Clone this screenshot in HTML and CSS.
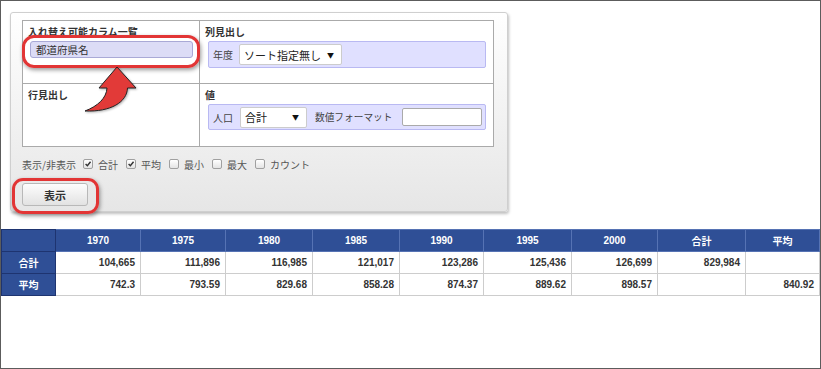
FILE: index.html
```html
<!DOCTYPE html>
<html lang="ja">
<head>
    <meta charset="UTF-8">
    <meta name="viewport" content="width=device-width, initial-scale=1.0">
    <title>ピボット集計</title>
    <link rel="stylesheet" href="styles.css">
</head>
<body>
    <div class="frame">
        <div class="panel">
            <table class="setup">
                <tr>
                    <td class="cell">
                        <div class="cell-title">入れ替え可能カラム一覧</div>
                        <div class="ring-wrap chip-ring">
                            <div class="chip">都道府県名</div>
                        </div>
                    </td>
                    <td class="cell">
                        <div class="cell-title">列見出し</div>
                        <div class="zone">
                            <span class="zone-label">年度</span>
                            <span class="select select-sort">ソート指定無し<span class="caret">▼</span></span>
                        </div>
                    </td>
                </tr>
                <tr>
                    <td class="cell">
                        <div class="cell-title">行見出し</div>
                    </td>
                    <td class="cell">
                        <div class="cell-title">値</div>
                        <div class="zone zone-values">
                            <span class="zone-label">人口</span>
                            <span class="select select-agg">合計<span class="caret">▼</span></span>
                            <span class="zone-label format-label">数値フォーマット</span>
                            <span class="text-input"></span>
                        </div>
                    </td>
                </tr>
            </table>

            <div class="toggles">
                <span class="toggles-label">表示/非表示</span>
                <label class="toggle"><span class="check checked"><svg viewBox="0 0 10 10"><path d="M2 5 L4.2 7.2 L8.2 2.2"/></svg></span>合計</label>
                <label class="toggle"><span class="check checked"><svg viewBox="0 0 10 10"><path d="M2 5 L4.2 7.2 L8.2 2.2"/></svg></span>平均</label>
                <label class="toggle"><span class="check"></span>最小</label>
                <label class="toggle"><span class="check"></span>最大</label>
                <label class="toggle"><span class="check"></span>カウント</label>
            </div>

            <div class="ring-wrap btn-ring">
                <button class="show-btn" type="button">表示</button>
            </div>

            <!-- annotation arrow -->
            <svg class="arrow" width="62" height="56" viewBox="0 0 62 56">
                <path d="M37 5 L56 26 L47.5 26 C47 40 31 50 5 49 C18 44 26.5 36 27 26 L19 26 Z"/>
            </svg>
        </div>

        <table class="result">
            <colgroup>
                <col style="width:54px">
                <col style="width:85px">
                <col style="width:85px">
                <col style="width:87px">
                <col style="width:87px">
                <col style="width:84px">
                <col style="width:88px">
                <col style="width:86px">
                <col style="width:88px">
                <col>
            </colgroup>
            <tr>
                <th class="corner"></th>
                <th>1970</th>
                <th>1975</th>
                <th>1980</th>
                <th>1985</th>
                <th>1990</th>
                <th>1995</th>
                <th>2000</th>
                <th>合計</th>
                <th>平均</th>
            </tr>
            <tr>
                <th class="row-head">合計</th>
                <td>104,665</td>
                <td>111,896</td>
                <td>116,985</td>
                <td>121,017</td>
                <td>123,286</td>
                <td>125,436</td>
                <td>126,699</td>
                <td>829,984</td>
                <td></td>
            </tr>
            <tr>
                <th class="row-head">平均</th>
                <td>742.3</td>
                <td>793.59</td>
                <td>829.68</td>
                <td>858.28</td>
                <td>874.37</td>
                <td>889.62</td>
                <td>898.57</td>
                <td></td>
                <td>840.92</td>
            </tr>
        </table>
    </div>
</body>
</html>
```
FILE: styles.css
```css
* {
    box-sizing: border-box;
}

body {
    margin: 0;
    font-family: "Liberation Sans", "Noto Sans CJK JP", sans-serif;
    color: #333;
    background-color: #fff;
}

.frame {
    width: 821px;
    height: 369px;
    border: 1px solid #5c5c5c;
    overflow: hidden;
}

/* settings panel */
.panel {
    position: relative;
    width: 498px;
    margin: 11px 0 0 9px;
    padding: 7px 11px 5px 11px;
    background: linear-gradient(#ffffff, #e6e6e6);
    border: 1px solid #cfcfcf;
    border-radius: 3px;
    box-shadow: 1px 2px 3px rgba(0, 0, 0, 0.25);
}

.setup {
    width: 472px;
    border-collapse: collapse;
    background-color: #fff;
}

.cell {
    width: 177px;
    height: 63px;
    padding: 4px 5px 0 5px;
    border: 1px solid #aaa;
    vertical-align: top;
}

.cell + .cell {
    width: auto;
}

.cell-title {
    font-family: "Noto Sans CJK JP", sans-serif;
    font-size: 10px;
    font-weight: bold;
    line-height: 14px;
    color: #333;
}

.ring-wrap {
    position: relative;
    display: inline-block;
}

.ring-wrap::after {
    content: "";
    position: absolute;
    border: 3px solid #e23535;
    box-shadow: 1px 2px 4px rgba(0, 0, 0, 0.4);
    pointer-events: none;
}

.chip-ring {
    margin: 2px 0 0 2px;
}

.chip-ring::after {
    top: -6px;
    bottom: -10px;
    left: -8px;
    right: -7px;
    border-radius: 12px;
}

.chip {
    width: 163px;
    height: 17px;
    padding-left: 5px;
    font-family: "Noto Sans CJK JP", sans-serif;
    font-size: 10.5px;
    line-height: 15px;
    color: #333;
    background-color: #dcdcf6;
    border: 1px solid #a9a9d6;
    border-radius: 3px;
}

.zone {
    display: flex;
    align-items: center;
    width: 278px;
    height: 27px;
    margin: 2px 0 0 3px;
    padding: 0 3px 0 4px;
    background-color: #e0e0ff;
    border: 1px solid #b9b9f2;
    border-radius: 2px;
}

.zone-values {
    height: 26px;
}

.zone > * {
    flex-shrink: 0;
    white-space: nowrap;
}

.zone-label {
    font-family: "Noto Sans CJK JP", sans-serif;
    font-size: 10px;
    color: #444;
}

.select {
    display: flex;
    align-items: center;
    justify-content: space-between;
    height: 21px;
    margin-left: 7px;
    padding: 0 7px 0 4px;
    font-family: "Noto Sans CJK JP", sans-serif;
    font-size: 11px;
    color: #222;
    background-color: #fff;
    border: 1px solid #ccc;
    border-radius: 2px;
}

.select-sort {
    width: 103px;
    margin-left: 6px;
}

.select-agg {
    width: 67px;
}

.caret {
    font-size: 7px;
    color: #111;
}

.format-label {
    margin-left: 8px;
    font-size: 9.7px;
}

.text-input {
    width: 80px;
    height: 18px;
    margin-left: 9px;
    background-color: #fff;
    border: 1px solid #aaa;
    border-radius: 2px;
}

/* show / hide toggles */
.toggles {
    display: flex;
    align-items: center;
    height: 14px;
    margin-top: 10px;
    font-family: "Noto Sans CJK JP", sans-serif;
    font-size: 10px;
    color: #555;
}

.toggles-label {
    margin-right: 7px;
}

.toggle {
    display: flex;
    align-items: center;
    margin-right: 8px;
}

.check {
    display: inline-block;
    width: 10px;
    height: 10px;
    margin-right: 5px;
    background: linear-gradient(#fff, #e4e4e4);
    border: 1px solid #a0a0a0;
    border-radius: 2px;
}

.check svg {
    display: block;
    width: 8px;
    height: 8px;
}

.check path {
    fill: none;
    stroke: #333;
    stroke-width: 1.8;
}

.btn-ring {
    margin-top: 12px;
}

.btn-ring::after {
    top: -5px;
    bottom: -8px;
    left: -10px;
    right: -11px;
    border-radius: 11px;
}

.show-btn {
    display: block;
    width: 66px;
    height: 23px;
    padding: 0;
    font-family: "Noto Sans CJK JP", sans-serif;
    font-size: 11px;
    font-weight: bold;
    color: #333;
    background: linear-gradient(#fdfdfd, #e2e2e2);
    border: 1px solid #b8b8b8;
    border-radius: 3px;
}

.arrow {
    position: absolute;
    left: 69px;
    top: 49px;
    filter: drop-shadow(1px 1px 1px rgba(0, 0, 0, 0.3));
}

.arrow path {
    fill: #e23a38;
    stroke: #222;
    stroke-width: 1;
}

/* result table */
.result {
    width: 819px;
    margin-top: 17px;
    table-layout: fixed;
    border-collapse: collapse;
    font-size: 10px;
    font-weight: bold;
}

.result th,
.result td {
    height: 22px;
    padding: 0 5px;
    white-space: nowrap;
}

.result th {
    color: #fff;
    text-align: center;
    font-family: "Liberation Sans", "Noto Sans CJK JP", sans-serif;
    background-color: #2f4f96;
    border: 1px solid #5673b4;
}

.result th.corner,
.result th.row-head {
    border: 1px solid #1e3470;
}

.result td {
    color: #333;
    text-align: right;
    border: 1px solid #cdcdcd;
}
```
